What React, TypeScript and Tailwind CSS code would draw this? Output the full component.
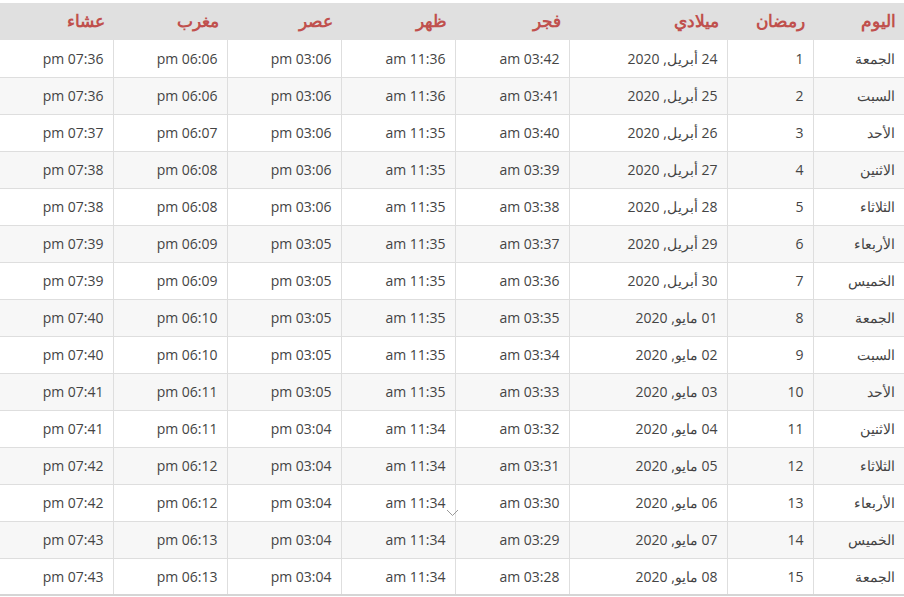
import React from 'react';

const rows = [
  ["الجمعة", "1", "24 أبريل, 2020", "03:42", "11:36", "03:06", "06:06", "07:36"],
  ["السبت", "2", "25 أبريل, 2020", "03:41", "11:36", "03:06", "06:06", "07:36"],
  ["الأحد", "3", "26 أبريل, 2020", "03:40", "11:35", "03:06", "06:07", "07:37"],
  ["الاثنين", "4", "27 أبريل, 2020", "03:39", "11:35", "03:06", "06:08", "07:38"],
  ["الثلاثاء", "5", "28 أبريل, 2020", "03:38", "11:35", "03:06", "06:08", "07:38"],
  ["الأربعاء", "6", "29 أبريل, 2020", "03:37", "11:35", "03:05", "06:09", "07:39"],
  ["الخميس", "7", "30 أبريل, 2020", "03:36", "11:35", "03:05", "06:09", "07:39"],
  ["الجمعة", "8", "01 مايو, 2020", "03:35", "11:35", "03:05", "06:10", "07:40"],
  ["السبت", "9", "02 مايو, 2020", "03:34", "11:35", "03:05", "06:10", "07:40"],
  ["الأحد", "10", "03 مايو, 2020", "03:33", "11:35", "03:05", "06:11", "07:41"],
  ["الاثنين", "11", "04 مايو, 2020", "03:32", "11:34", "03:04", "06:11", "07:41"],
  ["الثلاثاء", "12", "05 مايو, 2020", "03:31", "11:34", "03:04", "06:12", "07:42"],
  ["الأربعاء", "13", "06 مايو, 2020", "03:30", "11:34", "03:04", "06:12", "07:42"],
  ["الخميس", "14", "07 مايو, 2020", "03:29", "11:34", "03:04", "06:13", "07:43"],
  ["الجمعة", "15", "08 مايو, 2020", "03:28", "11:34", "03:04", "06:13", "07:43"],
];

const headers = ["اليوم", "رمضان", "ميلادي", "فجر", "ظهر", "عصر", "مغرب", "عشاء"];
const suffix = ["", "", "", " am", " am", " pm", " pm", " pm"];

export default function App() {
  return (
    <div className="w-[904px] h-[597px] bg-white pt-[3px] relative overflow-hidden" style={{ fontFamily: '"Open Sans", "Noto Sans", sans-serif' }}>
      <table dir="rtl" className="w-[904px] table-fixed border-collapse text-[14px] text-[#444]">
        <colgroup>
          <col className="w-[91px]" />
          <col className="w-[86px]" />
          <col className="w-[158px]" />
          <col className="w-[114px]" />
          <col className="w-[114px]" />
          <col className="w-[114px]" />
          <col className="w-[114px]" />
          <col className="w-[113px]" />
        </colgroup>
        <thead>
          <tr className="bg-[#e0e0e0] h-[37px]">
            {headers.map((h) => (
              <th key={h} className="text-right font-bold text-[#c0504d] px-[8px] text-[17px] leading-none pb-[3px]">{h}</th>
            ))}
          </tr>
        </thead>
        <tbody>
          {rows.map((r, i) => (
            <tr key={i} className={`h-[37px] ${i % 2 === 1 ? 'bg-[#f7f7f7]' : 'bg-white'} ${i === rows.length - 1 ? 'border-b-2 border-b-[#d5d5d5]' : 'border-b border-b-[#dedede]'}`}>
              {r.map((c, j) => (
                <td key={j} className={`text-right px-[9px] ${j < 7 ? 'border-l border-l-[#dedede]' : ''}`}>{c + suffix[j]}</td>
              ))}
            </tr>
          ))}
        </tbody>
      </table>
      <svg className="absolute left-[446px] top-[509px]" width="13" height="8" viewBox="0 0 13 8">
        <path d="M1 1 L6.5 6.5 L12 1" fill="none" stroke="#999" strokeWidth="1" />
      </svg>
    </div>
  );
}
